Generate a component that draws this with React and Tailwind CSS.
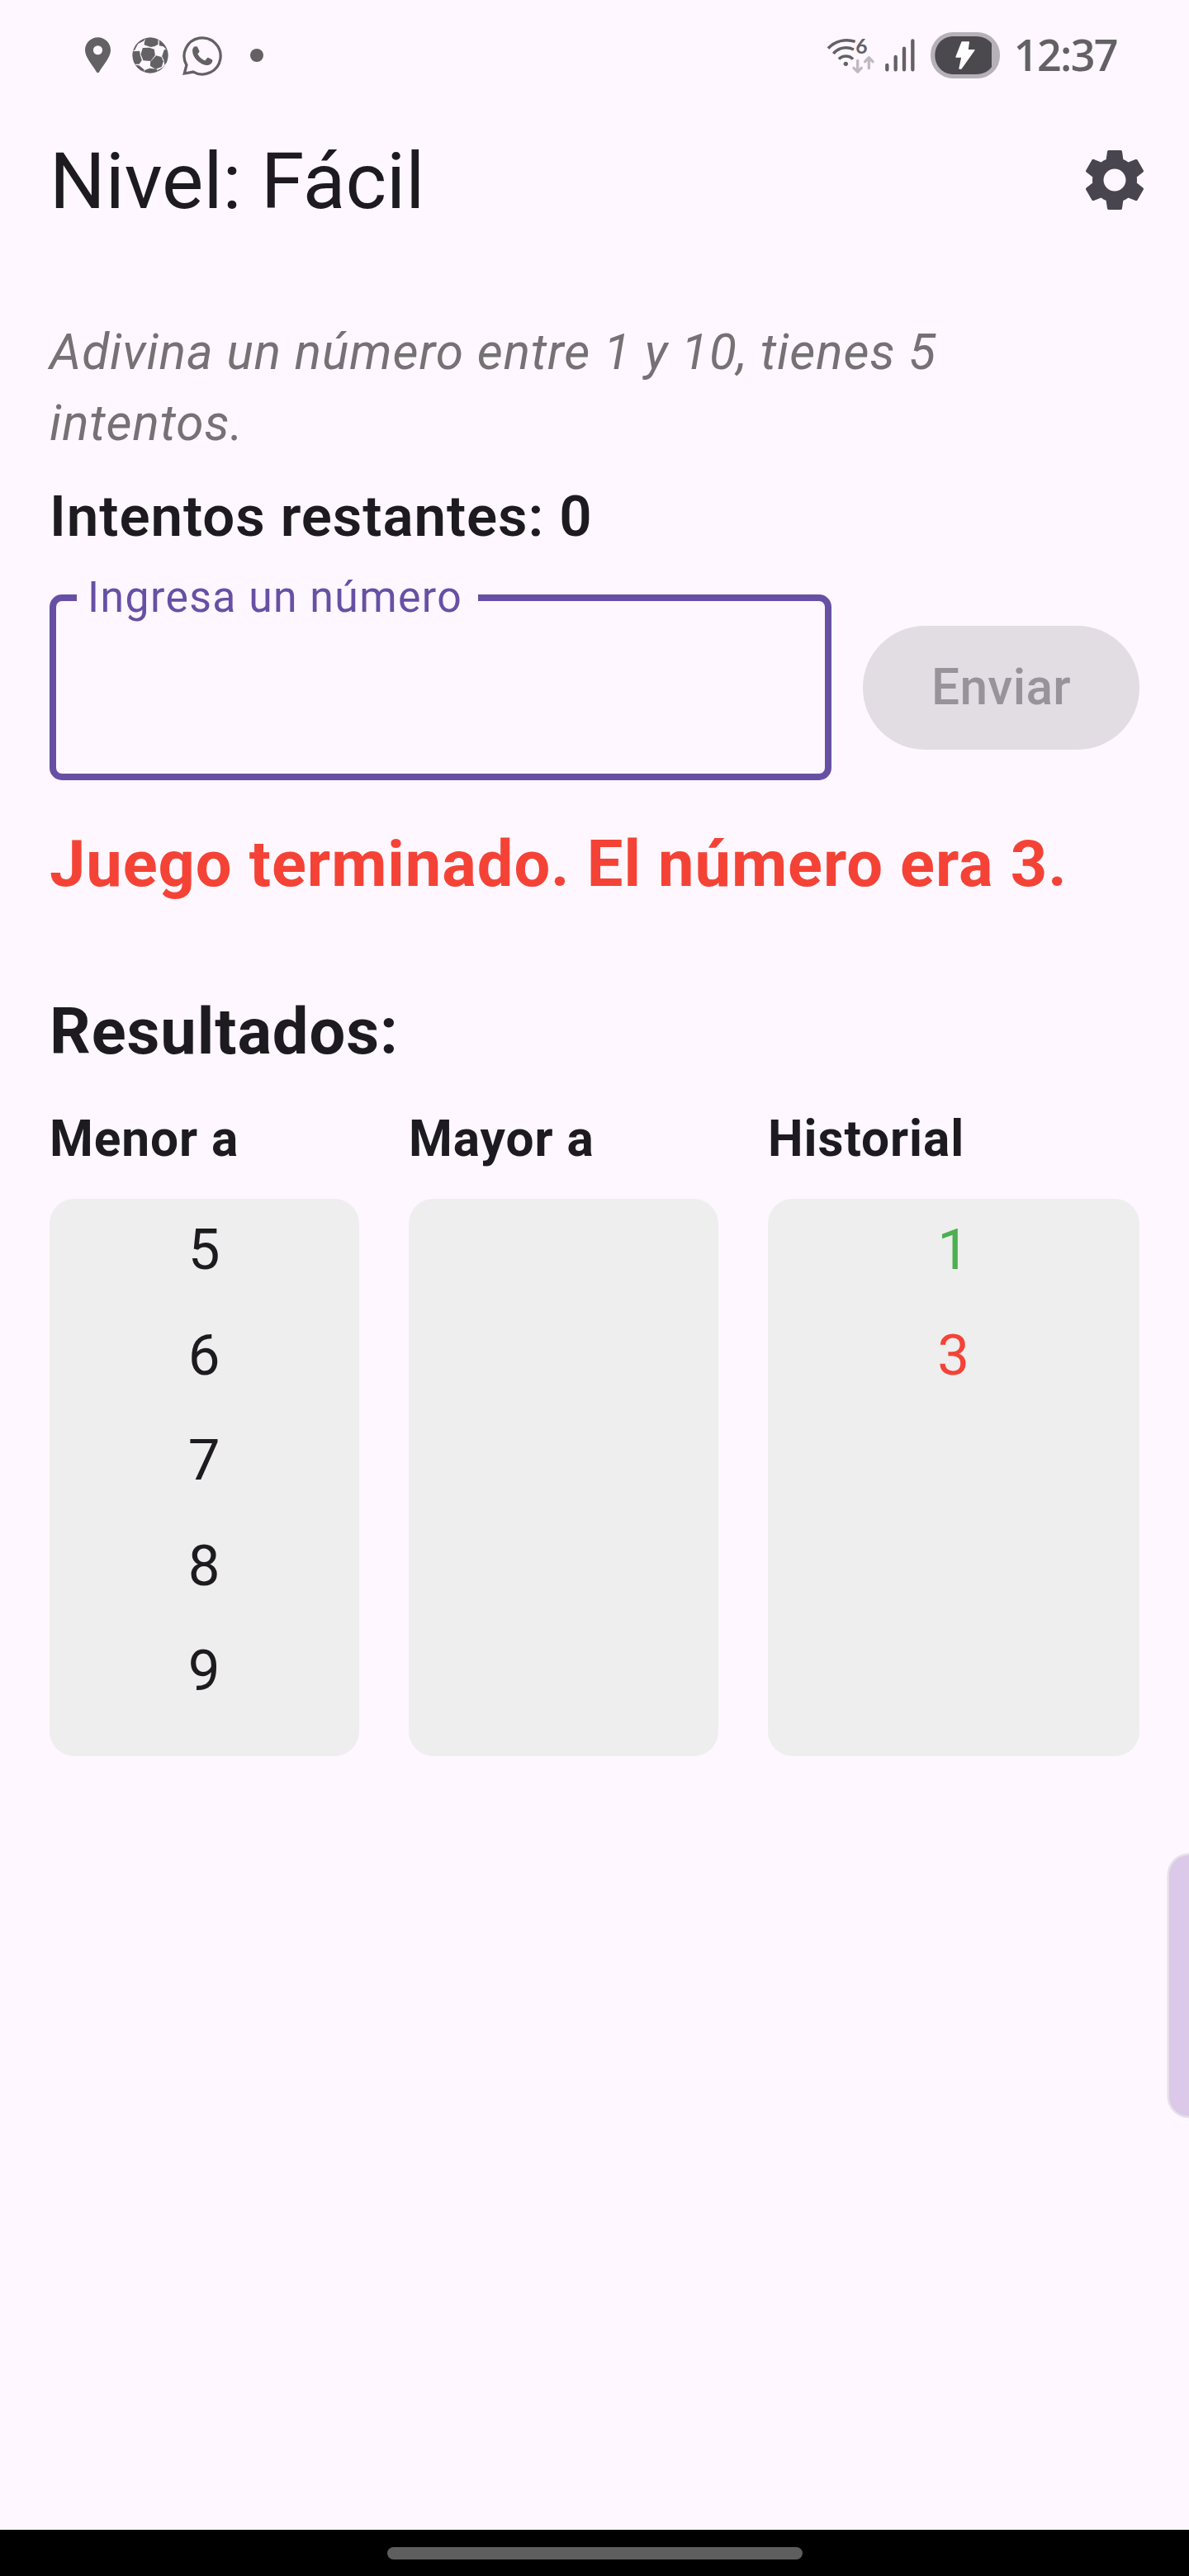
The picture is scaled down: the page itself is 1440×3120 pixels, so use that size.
import React from "react";

const lower = [5, 6, 7, 8, 9];
const history = [
  { value: 1, color: "text-[#4caf50]" },
  { value: 3, color: "text-[#f44336]" },
];

function PinIcon() {
  return (
    <svg className="ml-[103px] h-[44px] w-[31px]" viewBox="68 77 94 132" fill="#636164">
      <path
        fillRule="evenodd"
        d="M115 77C89 77 68 98 68 124C68 149 92 174 109 202C112 209 118 209 121 202C138 174 162 149 162 124C162 98 141 77 115 77ZM115 107A17 17 0 1 1 115 141A17 17 0 1 1 115 107Z"
      />
    </svg>
  );
}

function BallIcon() {
  return (
    <svg className="ml-[26px] size-[44px]" viewBox="239 76 131 132">
      <defs>
        <clipPath id="ball">
          <circle cx="304.5" cy="142" r="64.5" />
        </clipPath>
      </defs>
      <g clipPath="url(#ball)" fill="#636164">
        <path d="M290 76L284 91L282 104L306 112L321 109L333 102V84L324 76Z" />
        <path d="M277 115L301 114L319 120L322 142L306 163L279 161L270 138Z" />
        <path d="M326 143L345 148L352 164L346 184L323 192L304 180L305 165Z" />
        <path d="M236 128L266 126L268 142L274 160L264 174L247 174L236 160Z" />
        <path d="M337 82L350 86L372 116L366 124L352 110L337 107Z" />
        <path d="M355 122L362 120L374 130L374 160L356 176L354 160L347 146Z" />
        <path d="M240 124L254 98L276 78L290 78L280 90L260 100L248 123Z" />
        <path d="M284 196L302 189L330 192L328 210H282Z" />
        <path d="M244 177L264 179L282 194L281 208L256 198Z" />
        <path d="M331 196L350 186L344 200L330 206Z" />
      </g>
      <circle cx="304.5" cy="142" r="63.5" fill="none" stroke="#636164" strokeWidth="1.5" />
    </svg>
  );
}

function WhatsappIcon() {
  return (
    <svg className="ml-[17px] h-[49px] w-[48px]" viewBox="420 69 146 147">
      <path d="M427 208L435 177A67 67 0 1 1 460 202Z" fill="none" stroke="#636164" strokeWidth="10" />
      <path
        fill="#636164"
        d="M464 109L471 108C474 108 475 110 476 112L482 125C483 128 481 130 476 136C482 149 491 156 503 161L511 151C512 149 514 149 516 150L529 157C532 158 530 166 527 170C521 177 511 179 504 177C481 171 458 149 457 127C456 119 459 112 464 109Z"
      />
    </svg>
  );
}

function NetworkIcon() {
  return (
    <svg className="h-[61px] w-[109px]" viewBox="56 52 327 183" fill="none" strokeLinecap="round">
      <g stroke="#636164" strokeWidth="10.5" strokeLinecap="butt">
        <path d="M62 117C86 89 126 81 160 92" />
        <path d="M81 136C99 113 130 109 155 121" />
        <path d="M101 156C113 141 139 141 152 156" />
      </g>
      <circle cx="126" cy="173" r="8" fill="#636164" />
      <text x="162" y="135" fill="#636164" className="font-[Lato] text-[74px] font-bold tracking-normal">
        6
      </text>
      <g stroke="#bfbac1" strokeWidth="10" strokeLinejoin="round">
        <path d="M169 161V201M155 188L169 202L183 188" />
        <path d="M210 189V151M196 165L210 150L224 165" />
      </g>
      <g stroke="#636164" strokeWidth="13">
        <path d="M276 178V194M307 148V194M338 117V194M369 89V194" />
      </g>
    </svg>
  );
}

function BatteryIcon() {
  return (
    <svg className="ml-[17px] h-[56px] w-[84px]" viewBox="435 57 252 168">
      <rect x="435" y="57" width="252" height="168" rx="82" fill="#b6b1b8" />
      <path
        d="M520 72H600C627 72 645 83 657 98V183C645 199 627 210 600 210H520C477 210 451 178 451 141C451 104 477 72 520 72Z"
        fill="#4b494d"
      />
      <path
        d="M549 93H574L570 122H594L546 189H540L549 147H528Z"
        fill="#fff"
        stroke="#fff"
        strokeWidth="4"
        strokeLinejoin="round"
      />
    </svg>
  );
}

function GearIcon() {
  return (
    <svg className="size-[90px]" viewBox="0 0 24 24" fill="#49454f">
      <path d="M19.14 12.94c.04-.3.06-.61.06-.94 0-.32-.02-.64-.07-.94l2.03-1.58c.18-.14.23-.41.12-.61l-1.92-3.32c-.12-.22-.37-.29-.59-.22l-2.39.96c-.5-.38-1.03-.7-1.62-.94l-.36-2.54c-.04-.24-.24-.41-.48-.41h-3.84c-.24 0-.43.17-.47.41l-.36 2.54c-.59.24-1.13.57-1.62.94l-2.39-.96c-.22-.08-.47 0-.59.22L2.74 8.87c-.12.21-.08.47.12.61l2.03 1.58c-.05.3-.09.63-.09.94s.02.64.07.94l-2.03 1.58c-.18.14-.23.41-.12.61l1.92 3.32c.12.22.37.29.59.22l2.39-.96c.5.38 1.03.7 1.62.94l.36 2.54c.05.24.24.41.48.41h3.84c.24 0 .44-.17.47-.41l.36-2.54c.59-.24 1.13-.56 1.62-.94l2.39.96c.22.08.47 0 .59-.22l1.92-3.32c.12-.22.07-.47-.12-.61l-2.01-1.58zM12 15.6c-1.98 0-3.6-1.62-3.6-3.6s1.62-3.6 3.6-3.6 3.6 1.62 3.6 3.6-1.62 3.6-3.6 3.6z" />
    </svg>
  );
}

function StatusBar() {
  return (
    <div className="flex h-[134px] items-center">
      <PinIcon />
      <BallIcon />
      <WhatsappIcon />
      <div className="ml-[34px] size-4 rounded-full bg-[#636164]" />
      <div className="mr-[87px] ml-auto flex items-center">
        <NetworkIcon />
        <BatteryIcon />
        <span className="ml-[17px] pb-[3px] font-['Open_Sans',sans-serif] text-[52px] leading-[56px] font-semibold tracking-[-1.6px] text-[#636164]">
          12:37
        </span>
      </div>
    </div>
  );
}

function Column({ title, className, children }) {
  return (
    <section className={className}>
      <h3 className="text-[60.375px] leading-[86px] font-bold">{title}</h3>
      <div className="mt-[29px] flex h-[675px] flex-col items-center gap-[29px] rounded-[30px] bg-[#eeeeee] pt-[13px] text-[69px] leading-[98.5px]">
        {children}
      </div>
    </section>
  );
}

export default function App() {
  return (
    <div className="relative flex h-[3120px] w-[1440px] flex-col overflow-hidden bg-[#fef7ff] font-[Roboto,sans-serif] tracking-[0.9375px] text-[#1d1b20]">
      <StatusBar />
      <header className="flex h-[168px] items-center justify-between pr-[45px] pl-[60px]">
        <h1 className="pt-[3px] text-[94.875px] leading-[120px] tracking-normal">Nivel: Fácil</h1>
        <GearIcon />
      </header>

      <main className="flex flex-1 flex-col px-[60px] pt-[82px]">
        <p className="text-[60.375px] leading-[86.25px] text-[#757175] italic">
          Adivina un número entre 1 y 10, tienes 5 intentos.
        </p>
        <p className="mt-5 text-[69px] leading-[98.5px] font-semibold">Intentos restantes: 0</p>

        <div className="mt-[45px] flex items-center gap-[38px]">
          <div className="relative h-[225px] w-[947px] rounded-[15px] border-8 border-[#6750a4]">
            <label className="absolute -top-[34px] left-[25px] bg-[#fef7ff] pr-[19px] pl-[13px] text-[51.75px] leading-[60px] tracking-[1.406px] whitespace-nowrap text-[#6750a4]">
              Ingresa un número
            </label>
          </div>
          <button className="h-[150px] flex-1 rounded-full bg-[#e2dce3] text-[60.375px] leading-[86px] font-medium tracking-[0.375px] text-[#98939a]">
            Enviar
          </button>
        </div>

        <p className="mt-[46px] text-[77.625px] leading-[111px] font-bold text-[#f44336]">
          Juego terminado. El número era 3.
        </p>
        <h2 className="mt-[92px] text-[77.625px] leading-[111px] font-bold">Resultados:</h2>

        <div className="mt-8 flex gap-[60px]">
          <Column title="Menor a" className="w-[375px]">
            {lower.map((n) => (
              <span key={n}>{n}</span>
            ))}
          </Column>
          <Column title="Mayor a" className="w-[375px]" />
          <Column title="Historial" className="w-[450px]">
            {history.map(({ value, color }) => (
              <span key={value} className={color}>
                {value}
              </span>
            ))}
          </Column>
        </div>
      </main>

      <div className="absolute top-[2247px] right-0 h-[316px] w-6 rounded-l-[25px] bg-[#dcc8e9] shadow-[0_0_0_2.5px_#e6e0e8]" />
      <footer className="flex h-14 items-center justify-center bg-black">
        <div className="h-[15px] w-[503px] rounded-full bg-[#5e5e5e]" />
      </footer>
    </div>
  );
}
